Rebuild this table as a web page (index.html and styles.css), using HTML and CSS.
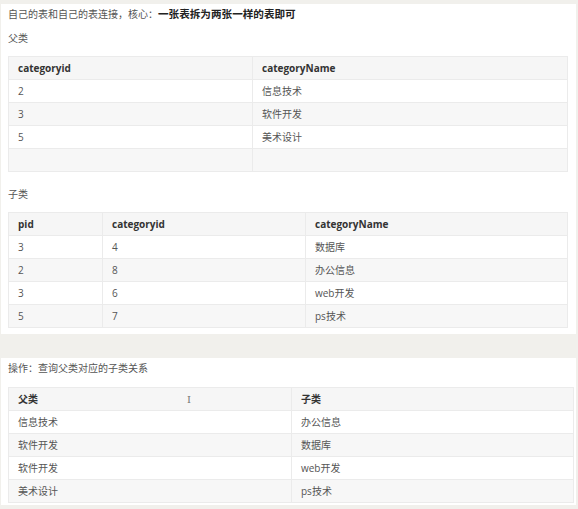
FILE: index.html
```html
<!DOCTYPE html>
<html lang="zh-CN">
<head>
<meta charset="utf-8">
<link rel="stylesheet" href="styles.css">
</head>
<body>
<section class="panel panel-one">
  <p class="lead">自己的表和自己的表连接，核心：<strong>一张表拆为两张一样的表即可</strong></p>
  <p class="label">父类</p>
  <table class="grid">
    <colgroup><col style="width:244px"><col></colgroup>
    <thead><tr><th>categoryid</th><th>categoryName</th></tr></thead>
    <tbody>
      <tr><td>2</td><td>信息技术</td></tr>
      <tr><td>3</td><td>软件开发</td></tr>
      <tr><td>5</td><td>美术设计</td></tr>
      <tr><td></td><td></td></tr>
    </tbody>
  </table>
  <p class="label">子类</p>
  <table class="grid">
    <colgroup><col style="width:94px"><col style="width:203px"><col></colgroup>
    <thead><tr><th>pid</th><th>categoryid</th><th>categoryName</th></tr></thead>
    <tbody>
      <tr><td>3</td><td>4</td><td>数据库</td></tr>
      <tr><td>2</td><td>8</td><td>办公信息</td></tr>
      <tr><td>3</td><td>6</td><td>web开发</td></tr>
      <tr><td>5</td><td>7</td><td>ps技术</td></tr>
    </tbody>
  </table>
</section>
<section class="panel panel-two">
  <p class="lead">操作：查询父类对应的子类关系</p>
  <table class="grid">
    <colgroup><col style="width:283px"><col></colgroup>
    <thead><tr><th>父类<span class="cursor">I</span></th><th>子类</th></tr></thead>
    <tbody>
      <tr><td>信息技术</td><td>办公信息</td></tr>
      <tr><td>软件开发</td><td>数据库</td></tr>
      <tr><td>软件开发</td><td>web开发</td></tr>
      <tr><td>美术设计</td><td>ps技术</td></tr>
    </tbody>
  </table>
</section>
</body>
</html>
```

FILE: styles.css
```css
html, body {
  margin: 0;
  padding: 0;
}
body {
  background: #f1f0ec;
  font-family: "Open Sans", "Noto Sans CJK SC", sans-serif;
  font-size: 10px;
  color: #555;
  width: 578px;
  height: 509px;
  overflow: hidden;
}
.panel {
  background: #fff;
  margin-left: 1px;
  width: 575px;
  box-sizing: border-box;
  padding: 0 0 0 7px;
}
.panel-one {
  margin-top: 4px;
  height: 330px;
  padding-right: 8px;
}
.panel-two {
  margin-top: 24px;
  height: 147px;
  padding-right: 2px;
}
.lead {
  margin: 0;
  padding-top: 3px;
  line-height: 14px;
  height: 14px;
}
.lead strong {
  color: #222;
  font-weight: 700;
  font-size: 10.6px;
}
.label {
  margin: 10px 0 0 0;
  line-height: 14px;
  height: 14px;
}
.panel-one .grid {
  margin-top: 11px;
}
.panel-two .grid {
  margin-top: 12px;
}
.grid + .label {
  margin-top: 15px;
}
.grid {
  width: 100%;
  border-collapse: collapse;
  table-layout: fixed;
}
.grid th, .grid td {
  border: 1px solid #ebebeb;
  height: 23px;
  padding: 0 9px;
  text-align: left;
  line-height: 14px;
  box-sizing: border-box;
}
.grid th {
  background: #f6f6f6;
  font-weight: 700;
  color: #333;
  position: relative;
}
.grid tbody tr:nth-child(odd) td { background: #fff; }
.grid tbody tr:nth-child(even) td { background: #f7f7f7; }
.cursor {
  position: absolute;
  left: 178px;
  top: 5px;
  font-family: "DejaVu Serif", serif;
  font-weight: 400;
  color: #777;
  font-size: 10px;
}
```
